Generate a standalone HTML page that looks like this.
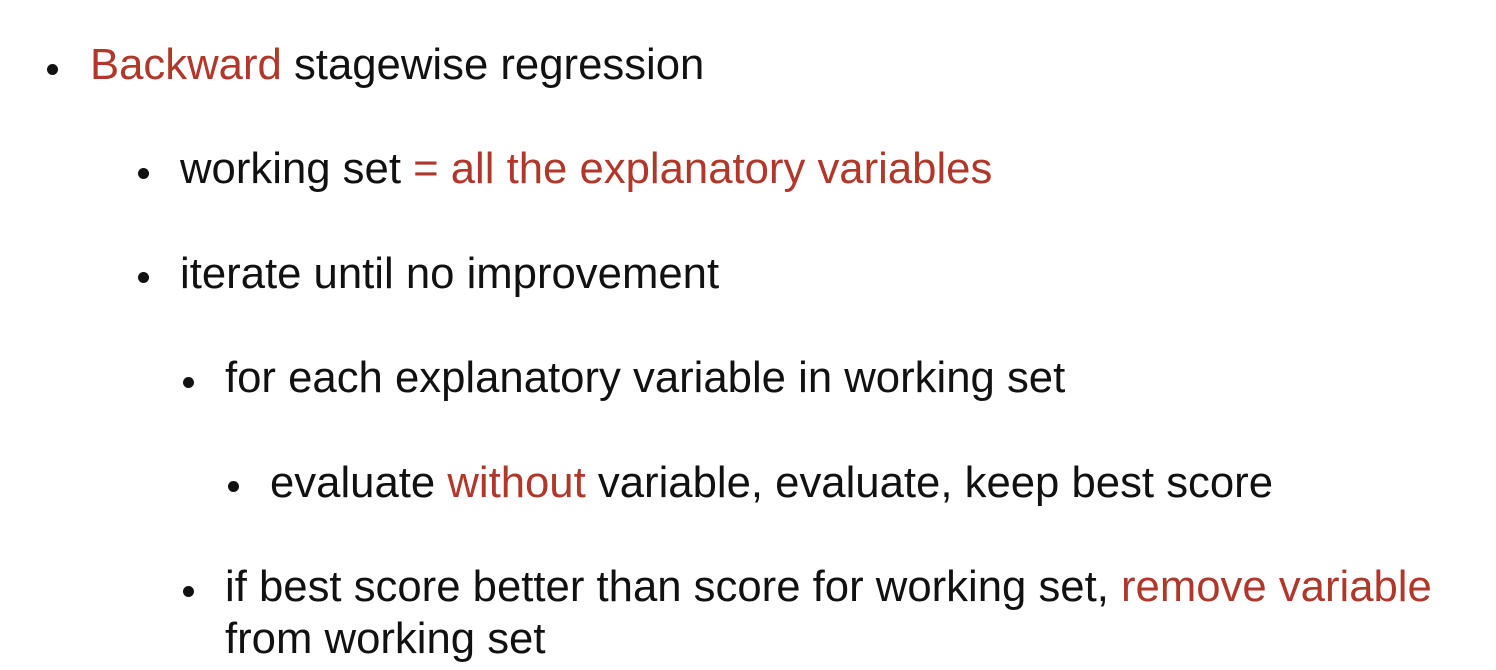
<!DOCTYPE html>
<html><head><style>
body{margin:0;width:1496px;height:670px;background:#fff;overflow:hidden;font-family:"Liberation Sans",Arial,sans-serif;font-size:43.7px;color:#111;}
.l{position:absolute;line-height:50px;white-space:nowrap;}
.b{position:absolute;width:11px;height:11px;border-radius:50%;background:#111;}
.r{color:#b1372a;}
</style></head><body>
<div class="b" style="left:47px;top:64px"></div>
<div class="l" style="left:90px;top:40px"><span class="r">Backward</span> stagewise regression</div>
<div class="b" style="left:138px;top:168px"></div>
<div class="l" style="left:180px;top:144px">working set <span class="r">= all the explanatory variables</span></div>
<div class="b" style="left:138px;top:272px"></div>
<div class="l" style="left:180px;top:249px">iterate until no improvement</div>
<div class="b" style="left:183px;top:377px"></div>
<div class="l" style="left:225px;top:353px">for each explanatory variable in working set</div>
<div class="b" style="left:228px;top:481px"></div>
<div class="l" style="left:270px;top:458px">evaluate <span class="r">without</span> variable, evaluate, keep best score</div>
<div class="b" style="left:183px;top:586px"></div>
<div class="l" style="left:225px;top:562px">if best score better than score for working set, <span class="r">remove variable</span></div>
<div class="l" style="left:225px;top:614px">from working set</div>
</body></html>
